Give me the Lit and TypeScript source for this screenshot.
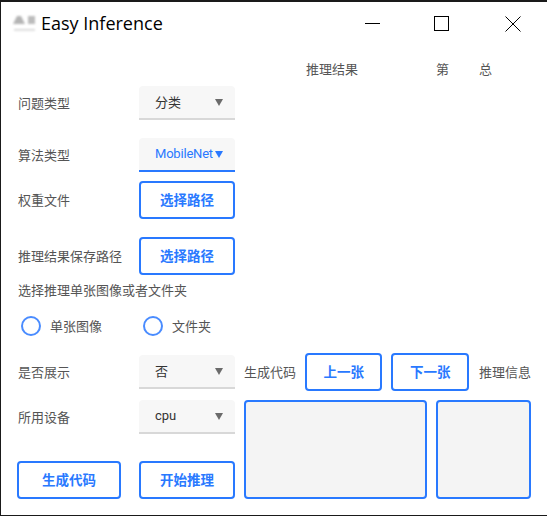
import { LitElement, html, css } from "lit";
import { customElement } from "lit/decorators.js";

@customElement("app-root")
export class AppRoot extends LitElement {
  static styles = css`
    :host {
      display: block;
      width: 547px;
      height: 516px;
      box-sizing: border-box;
      background: #fff;
      border-top: 2px solid #1a1a1a;
      border-left: 1px solid #1a1a1a;
      border-bottom: 1px solid #1a1a1a;
      font-family: "Roboto", "Noto Sans CJK SC", sans-serif;
      font-size: 13px;
      color: #555;
      overflow: hidden;
    }
    .titlebar {
      display: flex;
      align-items: center;
      height: 44px;
      padding-left: 11px;
    }
    .logo { width: 26px; height: 22px; margin-right: 3px; flex: none; }
    .title {
      font-family: "Open Sans", sans-serif;
      font-size: 18px;
      color: #000;
      flex: 1;
      white-space: nowrap;
      padding-bottom: 3px;
    }
    .win { display: flex; align-items: center; }
    .win svg { display: block; width: 16px; height: 16px; }
    .win .a { margin-right: 54px; }
    .win .b { margin-right: 55px; }
    .win .c { margin-right: 26px; }
    .results {
      display: flex;
      height: 16px;
      align-items: center;
      margin-top: 16px;
      padding-left: 305px;
      line-height: 16px;
    }
    .results .r { width: 130px; }
    .results .d { width: 43px; }
    .main { display: flex; margin-top: 8px; padding-left: 16px; }
    .left { width: 218px; display: flex; flex-direction: column; flex: none; }
    .row { display: flex; align-items: center; }
    .row .lbl { box-sizing: border-box; width: 122px; flex: none; white-space: nowrap; padding: 0 0 2px 1px; }
    .select {
      box-sizing: border-box;
      width: 96px;
      height: 34px;
      display: flex;
      align-items: center;
      justify-content: space-between;
      padding: 0 12px 0 16px;
      background: #f7f7f7;
      border-bottom: 2px solid #d8d8d8;
      border-radius: 4px 4px 0 0;
      color: #333;
    }
    .select span { padding-bottom: 2px; }
    .select.on { border-bottom-color: #2979ff; color: #2979ff; letter-spacing: -0.2px; }
    .caret { width: 0; height: 0; flex: none; margin-top: 1px; border-left: 4.5px solid transparent; border-right: 4.5px solid transparent; border-top: 7.5px solid #6b6b6b; }
    .on .caret { border-top-color: #2979ff; margin-left: -4px; }
    .btn {
      box-sizing: border-box;
      height: 38px;
      display: flex;
      align-items: center;
      justify-content: center;
      border: 2px solid #2979ff;
      border-radius: 4px;
      background: #fff;
      color: #2979ff;
      font-size: 13.5px;
      font-weight: 700;
      white-space: nowrap;
      padding-bottom: 2px;
    }
    .w96 { width: 96px; }
    .w104 { width: 104px; }
    .w78 { width: 78px; }
    .m18 { margin-top: 18px; }
    .m9 { margin-top: 9px; }
    .caption { margin-top: 7px; padding-left: 1px; line-height: 18px; white-space: nowrap; }
    .radios { display: flex; align-items: center; margin-top: 16px; padding-left: 4px; height: 20px; }
    .dot { box-sizing: border-box; width: 20px; height: 20px; border: 2px solid #4a8cff; border-radius: 50%; flex: none; }
    .radios span { padding-bottom: 2px; }
    .radios .t1 { margin-left: 9px; width: 93px; }
    .radios .t2 { margin-left: 9px; }
    .m19 { margin-top: 19px; }
    .m11 { margin-top: 11px; }
    .m27 { margin-top: 27px; }
    .gap18 { margin-left: 18px; }
    .right {
      margin-left: 9px;
      width: 287px;
      display: flex;
      flex-direction: column;
      justify-content: flex-end;
    }
    .nav { display: flex; align-items: center; gap: 9px; }
    .nav .n1 { box-sizing: border-box; width: 52px; white-space: nowrap; padding-bottom: 2px; }
    .nav .n2 { margin-left: 1px; white-space: nowrap; padding-bottom: 2px; }
    .boxes { display: flex; gap: 9px; margin-top: 9px; height: 99px; }
    .box { box-sizing: border-box; background: #f4f4f4; border: 2px solid #2979ff; border-radius: 4px; }
    .box.big { width: 183px; }
    .box.small { width: 95px; }
  `;

  render() {
    return html`
      <div class="titlebar">
        <svg class="logo" viewBox="0 0 26 22">
          <defs><filter id="bl" x="-30%" y="-30%" width="160%" height="160%"><feGaussianBlur stdDeviation="1"/></filter></defs>
          <g filter="url(#bl)">
            <path d="M1 11 L5 3 H9 L13 11 Z" fill="#b4b4b4"/>
            <rect x="16" y="3" width="7" height="8" fill="#bcbcbc"/>
            <rect x="2" y="16" width="21" height="1.6" fill="#d4d4d4"/>
          </g>
        </svg>
        <div class="title">Easy Inference</div>
        <div class="win">
          <svg class="a" viewBox="0 0 16 16"><path d="M1 7.5H16" stroke="#000" stroke-width="1"/></svg>
          <svg class="b" viewBox="0 0 16 16"><rect x="0.5" y="0.5" width="14" height="14" fill="none" stroke="#000"/></svg>
          <svg class="c" viewBox="0 0 16 16"><path d="M0.5 0.5L15.5 15.5M15.5 0.5L0.5 15.5" stroke="#000" stroke-width="1"/></svg>
        </div>
      </div>
      <div class="results">
        <span class="r">推理结果</span><span class="d">第</span><span>总</span>
      </div>
      <div class="main">
        <div class="left">
          <div class="row"><span class="lbl">问题类型</span><div class="select"><span>分类</span><i class="caret"></i></div></div>
          <div class="row m18"><span class="lbl">算法类型</span><div class="select on"><span>MobileNet</span><i class="caret"></i></div></div>
          <div class="row m9"><span class="lbl">权重文件</span><div class="btn w96">选择路径</div></div>
          <div class="row m18"><span class="lbl">推理结果保存路径</span><div class="btn w96">选择路径</div></div>
          <div class="caption">选择推理单张图像或者文件夹</div>
          <div class="radios"><i class="dot"></i><span class="t1">单张图像</span><i class="dot"></i><span class="t2">文件夹</span></div>
          <div class="row m19"><span class="lbl">是否展示</span><div class="select"><span>否</span><i class="caret"></i></div></div>
          <div class="row m11"><span class="lbl">所用设备</span><div class="select"><span>cpu</span><i class="caret"></i></div></div>
          <div class="row m27"><div class="btn w104">生成代码</div><div class="btn w96 gap18">开始推理</div></div>
        </div>
        <div class="right">
          <div class="nav">
            <span class="n1">生成代码</span>
            <div class="btn w78">上一张</div>
            <div class="btn w78">下一张</div>
            <span class="n2">推理信息</span>
          </div>
          <div class="boxes"><div class="box big"></div><div class="box small"></div></div>
        </div>
      </div>
    `;
  }
}
